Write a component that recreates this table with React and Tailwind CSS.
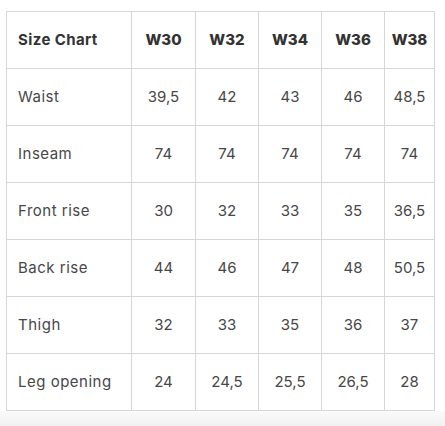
const sizes = ['W30', 'W32', 'W34', 'W36', 'W38'];

const rows = [
  { label: 'Waist', values: ['39,5', '42', '43', '46', '48,5'] },
  { label: 'Inseam', values: ['74', '74', '74', '74', '74'] },
  { label: 'Front rise', values: ['30', '32', '33', '35', '36,5'] },
  { label: 'Back rise', values: ['44', '46', '47', '48', '50,5'] },
  { label: 'Thigh', values: ['32', '33', '35', '36', '37'] },
  { label: 'Leg opening', values: ['24', '24,5', '25,5', '26,5', '28'] },
];

const colWidths = ['w-[125px]', 'w-[64px]', 'w-[63px]', 'w-[63px]', 'w-[63px]', 'w-[50px]'];

function App() {
  return (
    <div className="min-h-screen flex flex-col bg-white font-['Inter',sans-serif]">
      <div className="pt-[11px] pl-[6px]">
        <table className="table-fixed border-collapse w-[428px]">
          <colgroup>
            {colWidths.map((w, i) => (
              <col key={i} className={w} />
            ))}
          </colgroup>
          <thead>
            <tr className="h-[57px]">
              <th className="border border-[#d6d6d6] text-left pl-[11px] text-[15px] font-bold tracking-[0.4px] text-[#333333]">
                Size Chart
              </th>
              {sizes.map((s) => (
                <th key={s} className="border border-[#d6d6d6] text-center text-[15px] font-extrabold text-[#333333]">
                  {s}
                </th>
              ))}
            </tr>
          </thead>
          <tbody>
            {rows.map((row) => (
              <tr key={row.label} className="h-[57px]">
                <td className="border border-[#d6d6d6] text-left pl-[11px] text-[15px] tracking-[0.5px] text-[#474747]">
                  {row.label}
                </td>
                {row.values.map((v, i) => (
                  <td key={i} className="border border-[#d6d6d6] text-center text-[15px] text-[#474747]">
                    {v}
                  </td>
                ))}
              </tr>
            ))}
          </tbody>
        </table>
      </div>
      <div className="flex-1 bg-gradient-to-b from-[#fafafa] to-[#f2f2f2]" />
    </div>
  );
}

export default App;
